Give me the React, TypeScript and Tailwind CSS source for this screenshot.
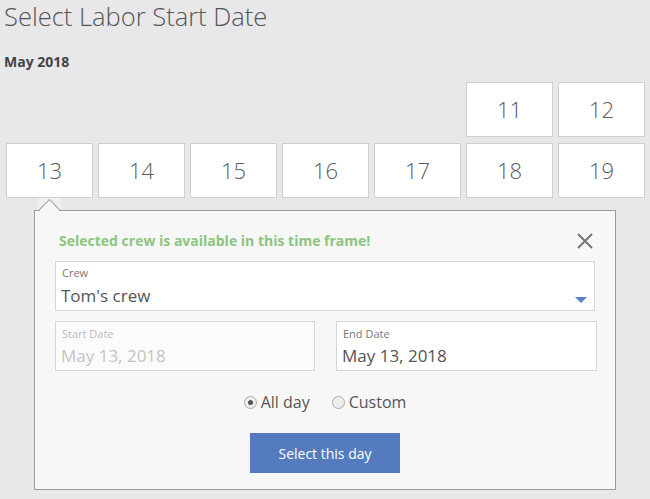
const firstRow = [null, null, null, null, null, 11, 12];
const secondRow = [13, 14, 15, 16, 17, 18, 19];

function DayCell({ day }: { day: number | null }) {
  if (day === null) return <div className="h-[55px]" />;
  return (
    <div className="h-[55px] bg-white border border-[#cfcfcf] flex items-center justify-center text-[22px] font-light text-[#5a5a5a]">
      {day}
    </div>
  );
}

function Field({ label, value, disabled }: { label: string; value: string; disabled?: boolean }) {
  return (
    <div className={`h-[50px] border border-[#d6d6d6] ${disabled ? 'bg-[#fbfbfb]' : 'bg-white'} pl-[6px] pt-[5px]`}>
      <div className={`text-[11px] leading-[14px] ${disabled ? 'text-[#bbb]' : 'text-[#777]'}`}>{label}</div>
      <div className={`mt-[2px] text-[17px] leading-[26px] -ml-[1px] ${disabled ? 'text-[#c4c4c4]' : 'text-[#555]'}`}>{value}</div>
    </div>
  );
}

export default function App() {
  return (
    <div className="min-h-screen bg-[#e8e8ea] font-['Open_Sans',sans-serif] text-[#555] overflow-hidden">
      <h1 className="pl-[4px] pt-[2px] text-[25.5px] leading-[28px] font-light text-[#555]">Select Labor Start Date</h1>
      <div className="pl-[4px] mt-[23px] text-[14px] leading-[18px] font-bold text-[#444]">May 2018</div>

      <div className="ml-[6px] mt-[11px] w-[639px] grid grid-cols-7 gap-x-[5px] gap-y-[6px]">
        {firstRow.map((d, i) => <DayCell key={'a' + i} day={d} />)}
        {secondRow.map((d) => <DayCell key={d} day={d} />)}
      </div>

      <div className="relative ml-[34px] mt-[12px] w-[582px] bg-[#f7f7f7] border border-[#9a9a9a] px-[20px] pt-[21px] pb-[16px]">
        {/* pointer towards the picked day */}
        <div className="absolute -top-[13px] left-[3px] w-[23px] h-[12px] bg-[#f0f0f1]" />
        <div className="absolute -top-[9px] left-[7px] w-[15px] h-[15px] rotate-45 bg-[#f7f7f7] border-l border-t border-[#9a9a9a]" />

        <div className="flex items-center justify-between h-[18px] pl-[4px] pr-[2px]">
          <div className="text-[14px] leading-[18px] font-bold text-[#8cc57f]">Selected crew is available in this time frame!</div>
          <svg width="16" height="16" viewBox="0 0 16 16" className="-mt-[1px]">
            <path d="M1 1 L15 15 M15 1 L1 15" stroke="#777" strokeWidth="2" />
          </svg>
        </div>

        <div className="relative mt-[11px] h-[50px] bg-white border border-[#d6d6d6] pl-[6px] pt-[4px]">
          <div className="text-[11px] leading-[14px] text-[#777]">Crew</div>
          <div className="mt-[3px] text-[17px] leading-[26px] -ml-[1px] text-[#555]">Tom's crew</div>
          <svg className="absolute right-[7px] top-[35px]" width="12" height="6" viewBox="0 0 12 6">
            <path d="M0 0 L12 0 L6 6 Z" fill="#5b80c6" />
          </svg>
        </div>

        <div className="mt-[10px] grid grid-cols-[260px_261px] gap-x-[21px]">
          <Field label="Start Date" value="May 13, 2018" disabled />
          <Field label="End Date" value="May 13, 2018" />
        </div>

        <div className="mt-[19px] flex items-center justify-center gap-[22px] text-[16px] leading-[24px] text-[#555]">
          <label className="flex items-center gap-[4px]">
            <span className="w-[13px] h-[13px] rounded-full border border-[#aaa] bg-[#eee] flex items-center justify-center">
              <span className="w-[5px] h-[5px] rounded-full bg-[#555]" />
            </span>
            All day
          </label>
          <label className="flex items-center gap-[4px]">
            <span className="w-[13px] h-[13px] rounded-full border border-[#aaa] bg-[#eee]" />
            Custom
          </label>
        </div>

        <div className="mt-[19px] flex justify-center">
          <button className="w-[150px] h-[40px] bg-[#537bbd] text-white text-[14px]">Select this day</button>
        </div>
      </div>
    </div>
  );
}
